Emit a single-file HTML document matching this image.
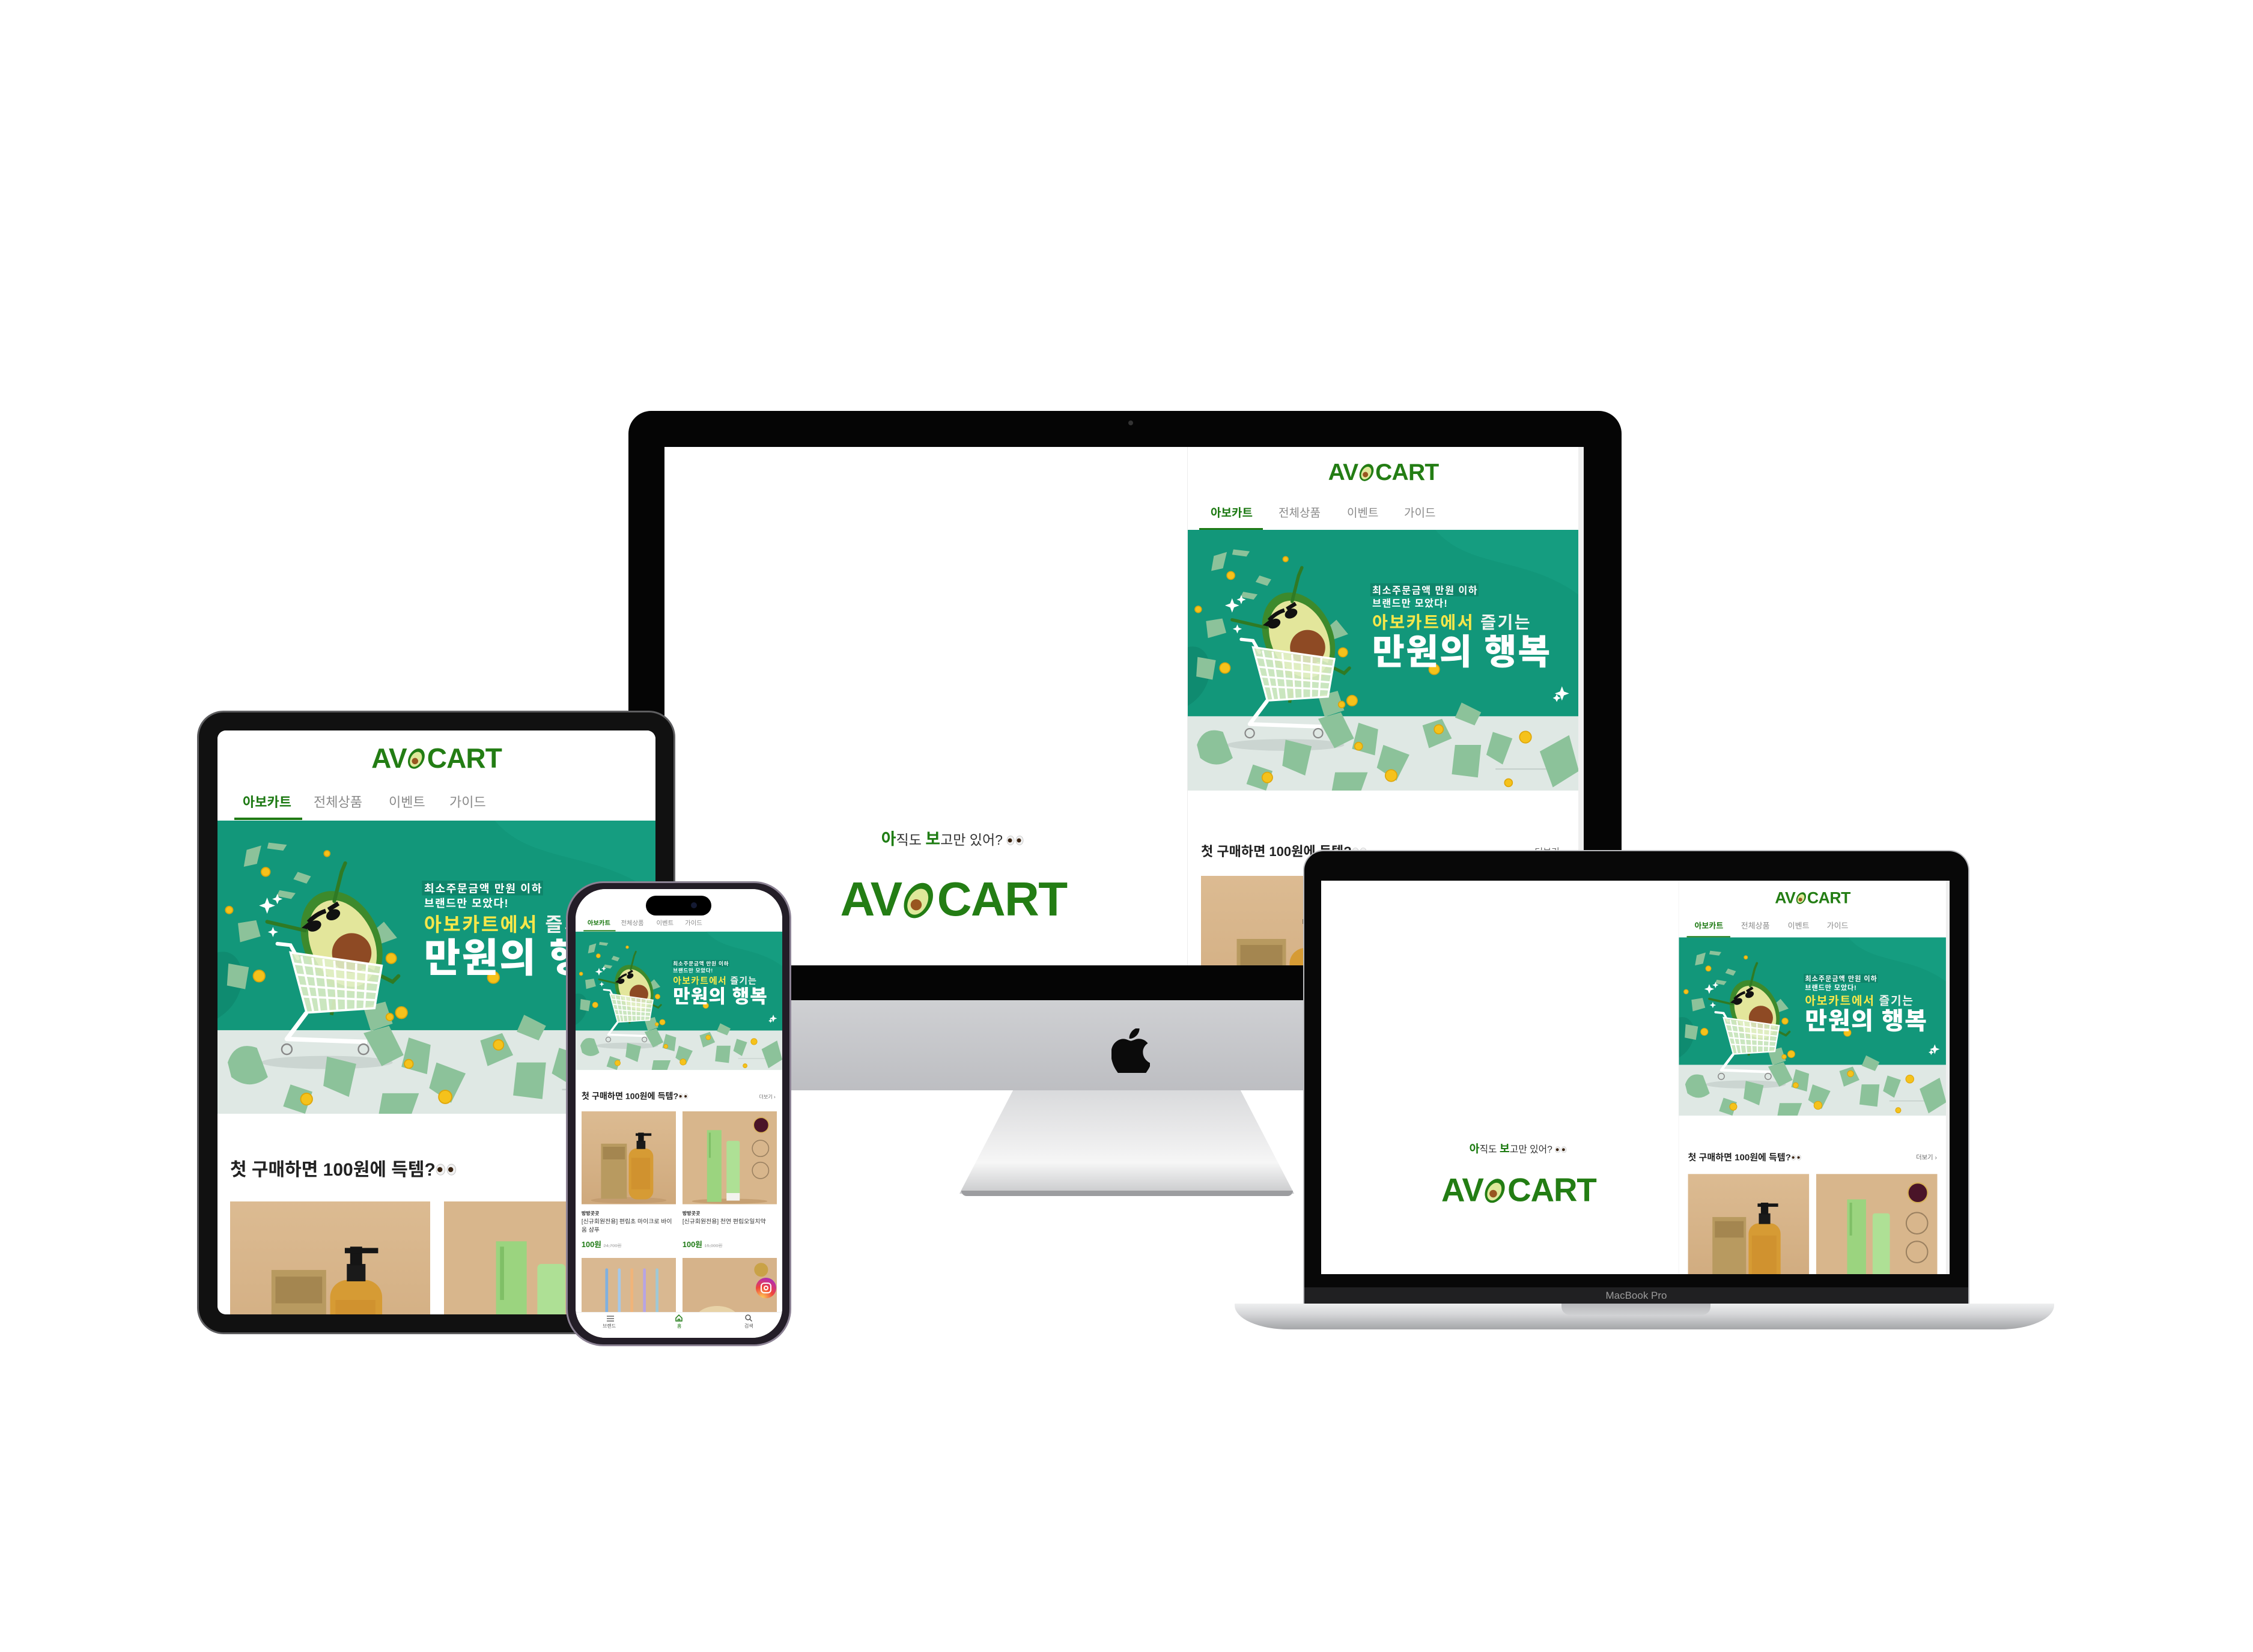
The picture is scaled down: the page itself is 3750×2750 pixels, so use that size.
<!DOCTYPE html>
<html><head><meta charset="utf-8">
<style>
*{margin:0;padding:0;box-sizing:border-box}
html,body{width:3750px;height:2750px;background:#fff;overflow:hidden}
body{position:relative;font-family:"Liberation Sans","Noto Sans CJK KR",sans-serif}
.a{position:absolute}
.logo{display:flex;align-items:center;justify-content:center;color:#237d14;font-weight:700;letter-spacing:-0.02em;white-space:nowrap;line-height:1}
.logo svg{width:.72em;height:.9em;margin:0 .01em}
.desk{position:absolute;left:0;top:0;width:1530px;height:960px;background:#fff;overflow:hidden;transform-origin:0 0}
.mob{position:absolute;left:0;top:0;width:729px;height:1583px;background:#fff;overflow:hidden;transform-origin:0 0}
.tab{position:absolute;color:#8a8a8a;white-space:nowrap;line-height:1}
.tab.on{color:#1e7a14;font-weight:700}
.ttl{position:absolute;font-weight:700;color:#222;white-space:nowrap;line-height:1}
.more{position:absolute;color:#666;white-space:nowrap;line-height:1}
.pimg{position:absolute;overflow:hidden}
.pimg svg{width:100%;height:100%;display:block}
</style></head><body>

<!-- ================= iMAC ================= -->
<div class="a" style="left:1046px;top:684px;width:1653px;height:981px;background:#050505;border-radius:38px 38px 0 0"></div>
<div class="a" style="left:1878px;top:700px;width:8px;height:8px;border-radius:50%;background:#333"></div>
<!-- stand -->
<div class="a" style="left:1597px;top:1815px;width:557px;height:172px;clip-path:polygon(16% 0,84% 0,100% 100%,0 100%);background:linear-gradient(180deg,#d9dadc 0%,#e9e9ea 40%,#f6f6f6 70%,#c9cacc 100%)"></div>
<div class="a" style="left:1600px;top:1982px;width:552px;height:9px;border-radius:0 0 10px 10px;background:#9c9da0"></div>
<div class="a" style="left:1046px;top:1665px;width:1653px;height:150px;background:linear-gradient(180deg,#cfd0d3,#bdbec2);border-radius:0 0 18px 18px"></div>
<svg class="a" style="left:1850px;top:1712px" width="64" height="74" viewBox="0 0 170 200"><path fill="#0b0b0b" d="M140 106c0-26 21-38 22-39-12-17-30-20-37-20-16-2-31 9-39 9-8 0-20-9-34-9C34 47 16 58 6 75c-20 35-5 86 14 114 9 14 20 29 35 28 14-1 19-9 36-9s21 9 36 9c15 0 25-14 34-28 11-16 15-31 15-32-1 0-36-14-36-51zM113 30c8-9 13-22 11-35-11 1-25 8-33 17-7 8-14 21-12 34 13 1 26-7 34-16z"/></svg>
<div class="a" style="left:1106px;top:744px;width:1530px;height:863px;overflow:hidden;background:#fff">
  <div class="desk" id="d1">
    <div class="a" style="left:0;top:640px;width:960px;text-align:center;font-size:23px;color:#333;line-height:1"><b style="color:#1f7d14;font-size:27px">아</b>직도 <b style="color:#1f7d14;font-size:27px">보</b>고만 있어? <svg width="30" height="16" viewBox="0 0 30 16" style="vertical-align:-1px"><ellipse cx="7" cy="8" rx="6" ry="7.5" fill="#f1f1f1" stroke="#ccc"/><ellipse cx="22" cy="8" rx="6" ry="7.5" fill="#f1f1f1" stroke="#ccc"/><circle cx="6" cy="8" r="3.5" fill="#3a2412"/><circle cx="21" cy="8" r="3.5" fill="#3a2412"/></svg></div>
    <div class="a logo" style="left:0;top:718px;width:962px;height:70px;font-size:80px"><span>AV</span><svg viewBox="0 0 50 62"><g transform="rotate(28 25 31)"><ellipse cx="25" cy="33" rx="19" ry="27" fill="#237d14"/><ellipse cx="25" cy="35" rx="13.5" ry="20" fill="#dfe89a"/><circle cx="25" cy="40" r="8" fill="#985620"/></g></svg><span>CART</span></div>
    <div class="a" style="left:870px;top:0;width:651px;height:960px;border-left:1px solid #ececec;background:#fff">
      <div class="a logo" style="left:0;top:24px;width:651px;height:36px;font-size:39px"><span>AV</span><svg viewBox="0 0 50 62"><g transform="rotate(28 25 31)"><ellipse cx="25" cy="33" rx="19" ry="27" fill="#237d14"/><ellipse cx="25" cy="35" rx="13.5" ry="20" fill="#dfe89a"/><circle cx="25" cy="40" r="8" fill="#985620"/></g></svg><span>CART</span></div>
      <div class="tab on" style="left:38px;top:101px;font-size:19px">아보카트</div>
      <div class="tab" style="left:151px;top:101px;font-size:19px">전체상품</div>
      <div class="tab" style="left:265px;top:101px;font-size:19px">이벤트</div>
      <div class="tab" style="left:360px;top:101px;font-size:19px">가이드</div>
      <div class="a" style="left:19px;top:135px;width:106px;height:3px;background:#1e7a14"></div>
      <div class="a BAN" style="left:0;top:138px;width:651px;height:434px"></div>
      <div class="ttl" style="left:22px;top:663px;font-size:22px">첫 구매하면 100원에 득템?<svg width="26" height="14" viewBox="0 0 30 16"><ellipse cx="7" cy="8" rx="6" ry="7.5" fill="#f1f1f1" stroke="#ccc"/><ellipse cx="22" cy="8" rx="6" ry="7.5" fill="#f1f1f1" stroke="#ccc"/><circle cx="6" cy="8" r="3.5" fill="#3a2412"/><circle cx="21" cy="8" r="3.5" fill="#3a2412"/></svg></div>
      <div class="more" style="right:22px;top:667px;font-size:15px">더보기 ›</div>
      <div class="pimg P1" style="left:22px;top:714px;width:295px;height:300px"></div>
      <div class="pimg P2" style="left:334px;top:714px;width:295px;height:300px"></div>
    </div>
    <div class="a" style="left:1521px;top:0;width:9px;height:960px;background:#efefef"></div>
  </div>
</div>

<!-- ================= LAPTOP ================= -->
<div class="a" style="left:2169px;top:1415px;width:1109px;height:755px;background:#080808;border-radius:34px 34px 0 0;border:2px solid #b9babd;border-bottom:none"></div>
<div class="a" style="left:2171px;top:2143px;width:1105px;height:27px;background:#202022;color:#9c9c9c;font-size:17px;text-align:center;line-height:27px">MacBook Pro</div>
<div class="a" style="left:2199px;top:1466px;width:1046px;height:655px;overflow:hidden;background:#fff">
  <div id="d2host"></div>
</div>
<div class="a" style="left:2055px;top:2170px;width:1364px;height:43px;background:linear-gradient(180deg,#eeeff0 0%,#d6d7d9 40%,#a4a5a8 100%);border-radius:0 0 90px 90px/0 0 40px 40px"></div>
<div class="a" style="left:2599px;top:2170px;width:248px;height:19px;background:linear-gradient(180deg,#b7b8bb,#cfd0d2);border-radius:0 0 14px 14px"></div>

<!-- ================= TABLET ================= -->
<div class="a" style="left:328px;top:1183px;width:796px;height:1038px;background:#111;border-radius:44px;border:3px solid #5e5e60"></div>
<div class="a" style="left:362px;top:1216px;width:729px;height:972px;overflow:hidden;border-radius:14px;background:#fff">
  <div class="mob" id="m1">
    <div class="a logo MLOGO" style="left:0;top:26px;width:729px;height:40px;font-size:46px"><span>AV</span><svg viewBox="0 0 50 62"><g transform="rotate(28 25 31)"><ellipse cx="25" cy="33" rx="19" ry="27" fill="#237d14"/><ellipse cx="25" cy="35" rx="13.5" ry="20" fill="#dfe89a"/><circle cx="25" cy="40" r="8" fill="#985620"/></g></svg><span>CART</span></div>
    <div class="tab on" style="left:42px;top:109px;font-size:22px">아보카트</div>
    <div class="tab" style="left:160px;top:109px;font-size:22px">전체상품</div>
    <div class="tab" style="left:285px;top:109px;font-size:22px">이벤트</div>
    <div class="tab" style="left:386px;top:109px;font-size:22px">가이드</div>
    <div class="a" style="left:28px;top:145px;width:113px;height:4px;background:#1e7a14"></div>
    <div class="a BAN" style="left:0;top:150px;width:729px;height:488px"></div>
    <div class="ttl" style="left:21px;top:717px;font-size:30px">첫 구매하면 100원에 득템?<svg width="36" height="20" viewBox="0 0 30 16"><ellipse cx="7" cy="8" rx="6" ry="7.5" fill="#f1f1f1" stroke="#ccc"/><ellipse cx="22" cy="8" rx="6" ry="7.5" fill="#f1f1f1" stroke="#ccc"/><circle cx="6" cy="8" r="3.5" fill="#3a2412"/><circle cx="21" cy="8" r="3.5" fill="#3a2412"/></svg></div>
    <div class="more" style="right:24px;top:724px;font-size:17px">더보기 ›</div>
    <div class="pimg P1" style="left:21px;top:784px;width:333px;height:328px"></div>
    <div class="pimg P2" style="left:377px;top:784px;width:333px;height:328px"></div>
    <div class="a" style="left:21px;top:1130px;font-size:17px;font-weight:700;color:#222">방방곳곳</div>
    <div class="a" style="left:21px;top:1158px;width:320px;font-size:21px;line-height:30px;color:#333">[신규회원전용] 편림초 마이크로 바이옴 샴푸</div>
    <div class="a" style="left:21px;top:1232px;font-size:27px;font-weight:700;color:#1e7a14">100원 <s style="font-size:16px;color:#aaa;font-weight:400">24,700원</s></div>
    <div class="a" style="left:377px;top:1130px;font-size:17px;font-weight:700;color:#222">방방곳곳</div>
    <div class="a" style="left:377px;top:1158px;width:330px;font-size:21px;line-height:30px;color:#333">[신규회원전용] 천연 편림오일치약</div>
    <div class="a" style="left:377px;top:1232px;font-size:27px;font-weight:700;color:#1e7a14">100원 <s style="font-size:16px;color:#aaa;font-weight:400">15,000원</s></div>
    <div class="pimg P3" style="left:21px;top:1301px;width:333px;height:328px"></div>
    <div class="pimg P4" style="left:377px;top:1301px;width:333px;height:328px"></div>
  </div>
</div>

<!-- ================= PHONE ================= -->
<div class="a" style="left:942px;top:1467px;width:375px;height:774px;background:#231d27;border-radius:62px;border:3px solid #8c8294"></div>
<div class="a" style="left:958px;top:1480px;width:344px;height:747px;overflow:hidden;border-radius:50px;background:#fff">
  <div id="m2host"></div>
  <div class="a" style="left:0;top:704px;width:344px;height:43px;background:#fff;border-top:1px solid #eee"></div>
  <svg class="a" style="left:1008px;top:0;left:50px;top:708px" width="16" height="14" viewBox="0 0 16 14"><path d="M2 3h12M2 7h12M2 11h12" stroke="#666" stroke-width="1.6"/></svg>
  <div class="a" style="left:45px;top:722px;font-size:8px;color:#555">브랜드</div>
  <svg class="a" style="left:165px;top:707px" width="14" height="14" viewBox="0 0 14 14"><path d="M2 7 L7 2 L12 7 V12 H2Z M5.5 12V9h3v3" fill="none" stroke="#1e7a14" stroke-width="1.5"/></svg>
  <div class="a" style="left:169px;top:722px;font-size:8px;color:#1e7a14">홈</div>
  <svg class="a" style="left:281px;top:707px" width="14" height="14" viewBox="0 0 14 14"><circle cx="6" cy="6" r="4" fill="none" stroke="#555" stroke-width="1.5"/><path d="M9 9l3.5 3.5" stroke="#555" stroke-width="1.5"/></svg>
  <div class="a" style="left:281px;top:722px;font-size:8px;color:#555">검색</div>
  <div class="a" style="left:300px;top:647px;width:34px;height:34px;border-radius:50%;background:radial-gradient(circle at 30% 100%,#fdd35a,#f0463a 45%,#c22f9b 75%,#7a3ad6)"></div>
  <div class="a" style="left:308px;top:655px;width:18px;height:18px;border:2.5px solid #fff;border-radius:6px"></div>
  <div class="a" style="left:313px;top:660px;width:8px;height:8px;border:2px solid #fff;border-radius:50%"></div>
</div>
<div class="a" style="left:1075px;top:1491px;width:109px;height:33px;background:#000;border-radius:17px"></div>
<div class="a" style="left:1150px;top:1502px;width:10px;height:10px;background:#141a33;border-radius:50%"></div>

<template id="BANT">
<svg viewBox="0 0 600 400" preserveAspectRatio="none" width="100%" height="100%" style="display:block">
<rect width="600" height="400" fill="#12977a"/>
<path d="M380 0 C430 60 520 40 600 100 L600 0Z" fill="#17a184" opacity=".6"/>
<path d="M0 180 C40 170 50 240 0 270Z" fill="#0f8b70"/>
<rect y="286" width="600" height="114" fill="#dfe8e4"/>
<line x1="472" y1="367" x2="562" y2="367" stroke="#c4cfcb" stroke-width="2"/>
<ellipse cx="150" cy="330" rx="90" ry="9" fill="#cbd5d1"/>
<g fill="#8cc29a">
<path d="M40 40 l20 -6 l-6 25 l-18 4z"/><path d="M70 30 l25 3 l-5 8 l-22 -3z"/><path d="M85 95 l22 4 l-6 8 l-20 -4z"/><path d="M110 70 l18 6 l-6 10 l-18 -6z"/>
<path d="M28 140 l25 -4 l6 22 l-28 8z"/><path d="M14 330 q10 -30 40 -20 l15 40 q-25 20 -50 0z"/><path d="M150 322 l40 10 l-10 45 l-35 -15z"/>
<path d="M200 290 l35 -10 l20 40 l-30 15z"/><path d="M262 296 l30 10 l-5 40 l-35 -10z"/><path d="M300 330 l40 15 l-20 40 l-30 -20z"/>
<path d="M360 300 l30 -10 l15 30 l-35 15z"/><path d="M410 330 l40 0 l-5 50 l-40 -5z"/><path d="M468 310 l30 10 l-15 40 l-25 -15z"/>
<path d="M540 340 l45 -25 l15 55 l-40 25z"/><path d="M100 360 l30 10 l-10 30 l-30 -10z"/><path d="M226 372 l50 0 l-10 28 l-45 0z"/>
<path d="M15 195 l28 5 l-5 30 l-25 -5z"/><path d="M228 138 l18 22 l-22 8 l-12 -16z"/><path d="M200 255 l30 -8 l10 30 l-30 10z"/><path d="M420 265 l30 15 l-10 20 l-30 -12z"/>
</g>
<g fill="#f5c21b" stroke="#dea60a" stroke-width="1.5">
<circle cx="66" cy="70" r="6"/><circle cx="16" cy="122" r="5"/><circle cx="57" cy="212" r="8"/><circle cx="238" cy="188" r="7"/><circle cx="252" cy="262" r="8"/>
<circle cx="378" cy="214" r="8"/><circle cx="385" cy="306" r="7"/><circle cx="262" cy="332" r="6"/><circle cx="122" cy="380" r="8"/><circle cx="312" cy="377" r="9"/>
<circle cx="518" cy="318" r="9"/><circle cx="492" cy="388" r="6"/><circle cx="236" cy="268" r="5"/><circle cx="150" cy="45" r="4"/></g>
<g fill="#fff"><path d="M68 105 l3 8 8 3 -8 3 -3 8 -3 -8 -8 -3 8 -3z"/><path d="M82 100 l2 5 5 2 -5 2 -2 5 -2 -5 -5 -2 5 -2z"/><path d="M76 145 l2 5 5 2 -5 2 -2 5 -2 -5 -5 -2 5 -2z"/><path d="M574 240 l3 8 8 3 -8 3 -3 8 -3 -8 -8 -3 8 -3z"/><path d="M566 252 l2 4 4 2 -4 2 -2 4 -2 -4 -4 -2 4 -2z"/></g>
<path d="M110 188 L100 170 L82 168" fill="none" stroke="#fff" stroke-width="5" stroke-linecap="round"/>
<path d="M122 262 L95 298 L205 302" fill="none" stroke="#fff" stroke-width="6" stroke-linejoin="round"/>
<circle cx="95" cy="312" r="7" fill="#dfe8e4" stroke="#888" stroke-width="2"/><circle cx="200" cy="312" r="7" fill="#dfe8e4" stroke="#888" stroke-width="2"/>
<g transform="rotate(-25 170 165)">
<path d="M145 210 L115 250" stroke="#2f7a24" stroke-width="5"/>
<ellipse cx="170" cy="165" rx="52" ry="72" fill="#3d8a2c"/>
<ellipse cx="170" cy="168" rx="43" ry="62" fill="#e3e69b"/>
<circle cx="176" cy="185" r="27" fill="#8e4a24"/>
<path d="M140 122 q14 -6 28 -4 M128 128 l16 -4 M172 118 l16 -2" stroke="#111" stroke-width="6" fill="none"/>
<ellipse cx="145" cy="130" rx="10" ry="7" fill="#111"/><ellipse cx="175" cy="127" rx="10" ry="7" fill="#111"/>
</g>
<path d="M68 138 L120 150 M200 200 L240 220 L248 212 M160 110 L170 70 L175 58" stroke="#2f7a24" stroke-width="5" fill="none" stroke-linecap="round"/>
<g>
<path d="M100 180 L225 198 L215 256 L122 262Z" fill="#dfeec6" opacity=".9"/>
<path d="M100 180 L225 198 L215 256 L122 262Z M115 185 L131 260 M130 187 L140 260 M145 189 L152 259 M160 191 L164 258 M175 193 L176 258 M190 195 L189 257 M205 196 L201 256 M104 195 L223 210 M108 210 L221 222 M112 225 L219 234 M116 240 L217 245" fill="none" stroke="#fff" stroke-width="3"/>
</g>
<rect x="280" y="82" width="166" height="20" fill="#0e7c64" opacity=".7"/>
<text x="283" y="98" font-size="15" fill="#fff" font-weight="700" textLength="161" font-family="Liberation Sans,Noto Sans CJK KR,sans-serif">최소주문금액 만원 이하</text>
<text x="283" y="118" font-size="15" fill="#fff" font-weight="700" textLength="115" font-family="Liberation Sans,Noto Sans CJK KR,sans-serif">브랜드만 모았다!</text>
<text x="283" y="151" font-size="26" fill="#eef3ef" font-weight="700" textLength="242" font-family="Liberation Sans,Noto Sans CJK KR,sans-serif"><tspan fill="#f6e74a">아보카트에서</tspan> 즐기는</text>
<text x="283" y="206" font-size="54" fill="#fff" font-weight="900" textLength="273" font-family="Liberation Sans,Noto Sans CJK KR,sans-serif">만원의 행복</text>
</svg>
</template>

<template id="P1T"><svg viewBox="0 0 300 300" preserveAspectRatio="xMidYMid slice"><defs><linearGradient id="g1" x1="0" y1="0" x2="0" y2="1"><stop offset="0" stop-color="#dcbb92"/><stop offset="1" stop-color="#cfa97c"/></linearGradient></defs><rect width="300" height="300" fill="url(#g1)"/><ellipse cx="150" cy="285" rx="120" ry="10" fill="#c49d70"/><rect x="62" y="105" width="82" height="175" fill="#b89a60"/><rect x="68" y="115" width="70" height="40" fill="#a48650"/><rect x="150" y="120" width="78" height="162" rx="26" fill="#d69b34"/><rect x="158" y="150" width="60" height="100" fill="#c98a2a" opacity=".5"/><rect x="175" y="96" width="28" height="26" fill="#1a1a1a"/><rect x="180" y="70" width="18" height="28" fill="#151515"/><path d="M172 72 H222 V80 H172Z" fill="#151515"/></svg></template>
<template id="P2T"><svg viewBox="0 0 300 300" preserveAspectRatio="xMidYMid slice"><rect width="300" height="300" fill="#d8b68c"/><ellipse cx="150" cy="288" rx="120" ry="8" fill="#c6a072"/><rect x="78" y="62" width="46" height="228" fill="#9bd47f"/><rect x="84" y="70" width="6" height="80" fill="#7fbf66"/><rect x="140" y="96" width="42" height="186" rx="6" fill="#aee095"/><rect x="140" y="262" width="42" height="24" fill="#f3f3ee"/><circle cx="250" cy="46" r="24" fill="#4a1428" stroke="#d6b25a" stroke-width="3"/><circle cx="248" cy="120" r="26" fill="none" stroke="#9a8060" stroke-width="3"/><circle cx="248" cy="190" r="26" fill="none" stroke="#9a8060" stroke-width="3"/></svg></template>
<template id="P3T"><svg viewBox="0 0 300 300" preserveAspectRatio="xMidYMid slice"><rect width="300" height="300" fill="#d9b891"/><g stroke-width="9" stroke-linecap="round"><path d="M80 40 V290" stroke="#7fb0e0"/><path d="M120 40 V290" stroke="#a5c8ea"/><path d="M160 40 V290" stroke="#f0b47a"/><path d="M200 40 V290" stroke="#b7a4e3"/><path d="M240 40 V290" stroke="#9fc8d6"/></g></svg></template>
<template id="P4T"><svg viewBox="0 0 300 300" preserveAspectRatio="xMidYMid slice"><rect width="300" height="300" fill="#d6b38a"/><ellipse cx="110" cy="200" rx="70" ry="45" fill="#e8d3a8"/><rect x="40" y="230" width="150" height="70" fill="#5d6e5a"/><rect x="190" y="190" width="90" height="110" fill="#8ccf7a"/><circle cx="250" cy="40" r="22" fill="#c9a247"/></svg></template>

<script>
(function(){
  var d1=document.getElementById('d1');
  var d2=d1.cloneNode(true); d2.id='d2'; d2.style.transform='scale(0.6837)';
  document.getElementById('d2host').appendChild(d2);
  var m1=document.getElementById('m1');
  var m2=m1.cloneNode(true); m2.id='m2'; m2.style.transform='scale(0.4719)';
  m2.querySelector('.MLOGO').style.visibility='hidden';
  document.getElementById('m2host').appendChild(m2);
  function fill(cls,tid){var t=document.getElementById(tid).innerHTML;document.querySelectorAll('.'+cls).forEach(function(e){e.innerHTML=t;});}
  fill('BAN','BANT');fill('P1','P1T');fill('P2','P2T');fill('P3','P3T');fill('P4','P4T');
})();
</script>
</body></html>
